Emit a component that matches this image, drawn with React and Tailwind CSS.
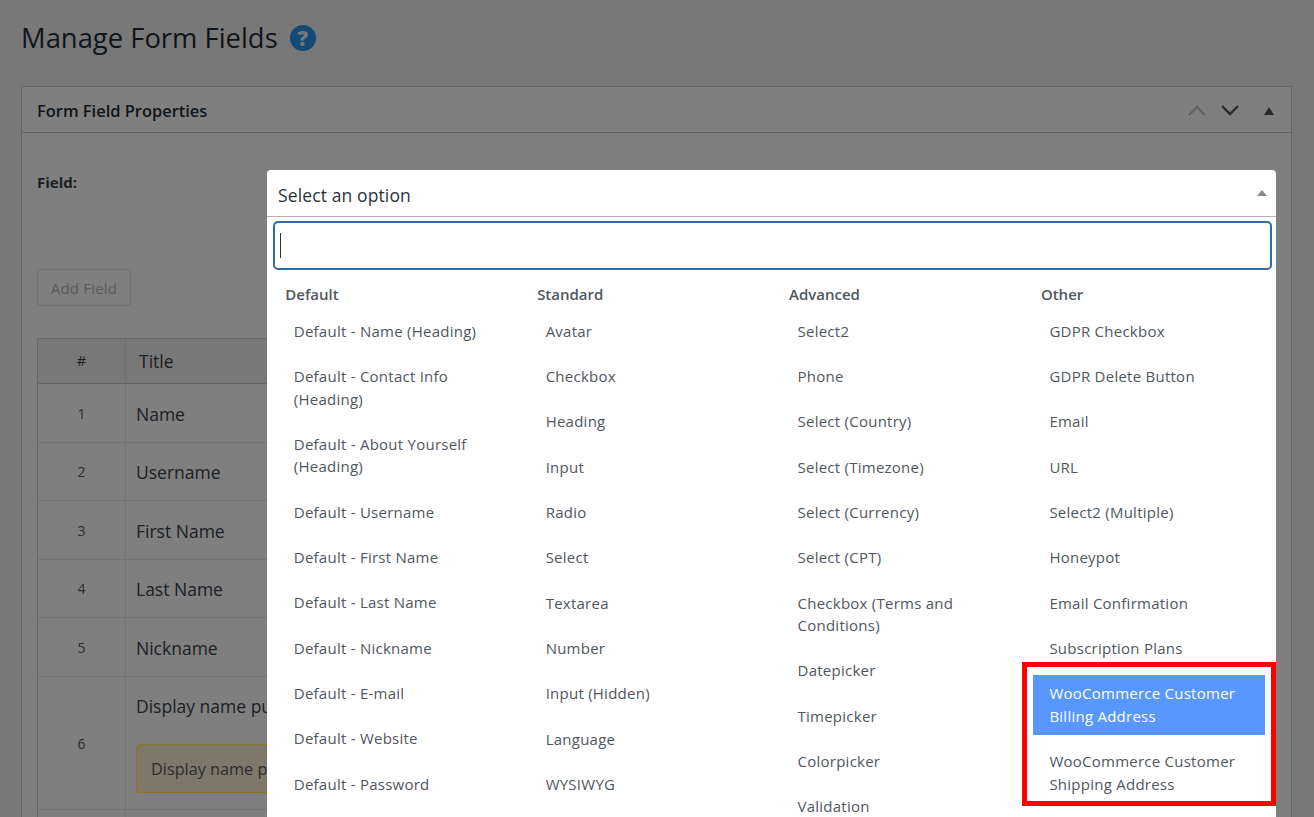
const columns = [
  { title: "Default", items: ["Default - Name (Heading)", "Default - Contact Info (Heading)", "Default - About Yourself (Heading)", "Default - Username", "Default - First Name", "Default - Last Name", "Default - Nickname", "Default - E-mail", "Default - Website", "Default - Password"] },
  { title: "Standard", items: ["Avatar", "Checkbox", "Heading", "Input", "Radio", "Select", "Textarea", "Number", "Input (Hidden)", "Language", "WYSIWYG"] },
  { title: "Advanced", items: ["Select2", "Phone", "Select (Country)", "Select (Timezone)", "Select (Currency)", "Select (CPT)", "Checkbox (Terms and Conditions)", "Datepicker", "Timepicker", "Colorpicker", "Validation"] },
  { title: "Other", items: ["GDPR Checkbox", "GDPR Delete Button", "Email", "URL", "Select2 (Multiple)", "Honeypot", "Email Confirmation", "Subscription Plans", "WooCommerce Customer Billing Address", "WooCommerce Customer Shipping Address"] },
];

const rows = [
  ["1", "Name", "h-[59px]", "pt-[2px]"],
  ["2", "Username", "h-[58px]", "pt-[1px]"],
  ["3", "First Name", "h-[59px]", "pt-[2px]"],
  ["4", "Last Name", "h-[58px]", "pt-[1px]"],
  ["5", "Nickname", "h-[59px]", "pt-[2px]"],
];

function Row({ n, h, pad = "pt-[1px]", children }) {
  return (
    <div className={`flex border-b border-[#737373] ${h}`}>
      <div className="w-[88px] shrink-0 flex items-center justify-center border-r border-[#757575] text-[14px] text-[#2c2c2c]">{n}</div>
      <div className={`w-[141px] shrink-0 overflow-hidden whitespace-nowrap pl-[10px] flex flex-col justify-center text-[17.5px] text-[#1b2024] ${pad}`}>{children}</div>
    </div>
  );
}

export default function App() {
  return (
    <div className="relative h-[817px] w-[1314px] overflow-hidden bg-[#787878] pl-[21px] pr-[22px] pt-[18px] [font-family:'Open_Sans',sans-serif]">
      <div className="flex h-[40px] items-center gap-[12px]">
        <h1 className="text-[27.4px] leading-[40px] text-[#111518]">Manage Form Fields</h1>
        <span className="flex h-[26px] w-[26px] items-center justify-center rounded-full bg-[#134a76] text-[21px] font-extrabold leading-none text-[#787878]">?</span>
      </div>

      <div className="relative mt-[28px] h-[900px] border border-[#656565] bg-[#7f7f7f]">
        <div className="flex h-[46px] items-center justify-between border-b border-[#656565] pl-[15px] pr-[17px]">
          <h2 className="relative top-[2px] text-[16.45px] font-semibold text-[#111518]">Form Field Properties</h2>
          <div className="flex items-center pt-[2px]">
            <svg width="18" height="11" viewBox="0 0 18 11" fill="none" stroke="#606060" strokeWidth="2.4"><path d="M1 10 L9 2 L17 10" /></svg>
            <svg className="ml-[15px]" width="18" height="11" viewBox="0 0 18 11" fill="none" stroke="#2b2b2b" strokeWidth="2.4"><path d="M1 1 L9 9 L17 1" /></svg>
            <svg className="ml-[25px]" width="10" height="8" viewBox="0 0 10 8" fill="#2b2b2b"><path d="M5 0 L10 8 L0 8 Z" /></svg>
          </div>
        </div>

        <div className="px-[15px]">
          <div className="pt-[39px] text-[15px] font-bold leading-[20px] text-[#1b2024]">Field:</div>
          <button className="mt-[77px] h-[37px] w-[94px] rounded-[3px] border border-[#707070] pt-[1px] text-[15px] tracking-[0.2px] text-[#5a5a5a]">Add Field</button>

          <div className="mt-[32px] border-x border-t border-[#666666]">
            <div className="flex h-[45px] border-b border-[#666666] bg-[#787878]">
              <div className="flex w-[88px] shrink-0 items-center justify-center border-r border-[#707070] text-[14.5px] text-[#1b2024]">#</div>
              <div className="flex flex-1 items-center pl-[13px] text-[17.5px] text-[#1b2024]">Title</div>
            </div>
            {rows.map(([n, t, h, p]) => (
              <Row key={n} n={n} h={h} pad={p}>{t}</Row>
            ))}
            <Row n="6" h="h-[133px]">
              <div className="relative bottom-[1px]">Display name publicly as</div>
              <div className="mt-[24px] h-[49px] w-[240px] rounded-[3px] border border-[#8f7420] bg-[#7d7869] pl-[14px] text-[16.25px] leading-[49px] text-[#2c2c2c]">Display name publicly as</div>
            </Row>
            <Row n="" h="h-[59px]" />
          </div>
        </div>
      </div>

      <div className="absolute left-[267px] top-[170px] h-[700px] w-[1009px] overflow-hidden rounded-t-[4px] bg-white text-[#50575e]">
        <div className="flex h-[47px] items-center justify-between border-b border-[#b4b4b4] pl-[11px] pr-[9px]">
          <span className="relative top-[2px] text-[17.5px] tracking-[0.12px] text-[#2c3338]">Select an option</span>
          <svg width="10" height="6" viewBox="0 0 10 6" fill="#888888"><path d="M5 0 L10 6 L0 6 Z" /></svg>
        </div>
        <div className="ml-[6px] mt-[4px] flex h-[49px] w-[999px] items-center rounded-[5px] border-2 border-[#2f6ca3] pl-[5px]">
          <span className="h-[25px] w-px bg-[#333333]" />
        </div>
        <div className="ml-[10.75px] mt-[13px] grid w-[987.5px] grid-cols-4 gap-x-[20px]">
          {columns.map((col) => (
            <div key={col.title}>
              <div className="pl-[7.5px] text-[15px] font-semibold leading-[22.5px] text-[#50575e]">{col.title}</div>
              <ul className="mt-[6.85px]">
                {col.items.map((item) => (
                  <li
                    key={item}
                    className={`mb-[7.8px] px-[16px] py-[7.5px] text-[15px] leading-[22.5px] tracking-[0.25px] ${item.includes("Billing") ? "bg-[#5897fb] text-white" : ""}`}
                  >
                    {item}
                  </li>
                ))}
              </ul>
            </div>
          ))}
        </div>
        <div className="absolute left-[755px] top-[492px] h-[144px] w-[254px] border-[5px] border-[#ff0000]" />
      </div>
    </div>
  );
}
